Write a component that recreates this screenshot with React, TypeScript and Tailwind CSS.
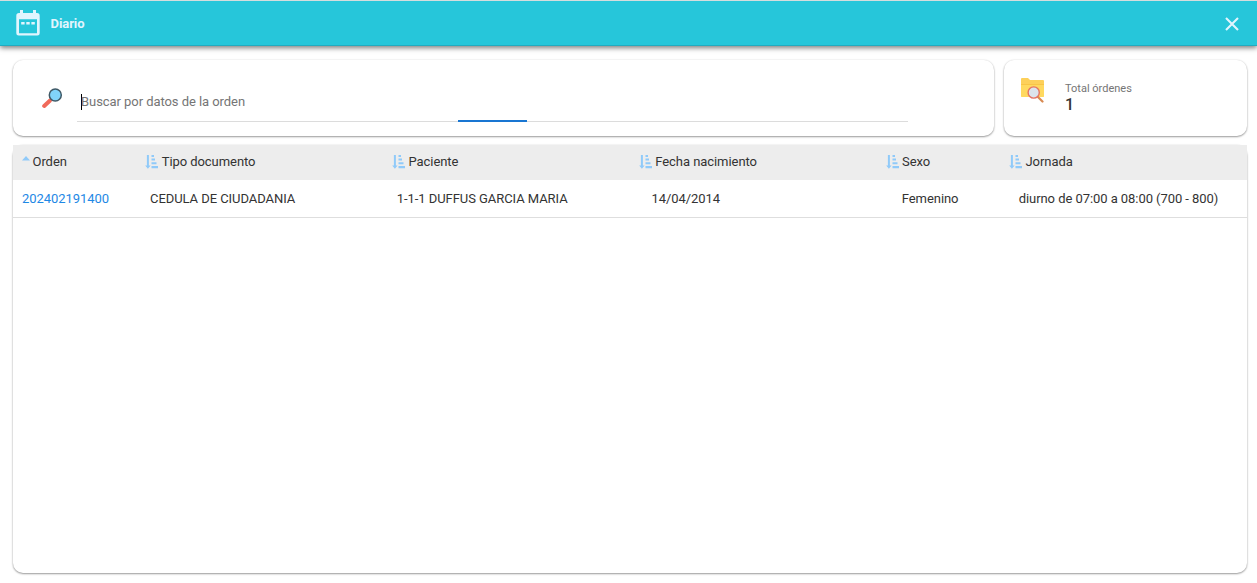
import React from 'react';

const columns = [
  { label: 'Orden', value: '202402191400', pad: 'pl-[9px]' },
  { label: 'Tipo documento', value: 'CEDULA DE CIUDADANIA', pad: 'pl-[13.6px]' },
  { label: 'Paciente', value: '1-1-1 DUFFUS GARCIA MARIA', pad: 'pl-[13.6px]' },
  { label: 'Fecha nacimiento', value: '14/04/2014', pad: 'pl-[21.5px]' },
  { label: 'Sexo', value: 'Femenino', pad: 'pl-[25px]' },
  { label: 'Jornada', value: 'diurno de 07:00 a 08:00 (700 - 800)', pad: 'pl-[18.5px]' },
];

const grid = 'grid grid-cols-[10%_20%_20%_20%_10%_20%] items-center whitespace-nowrap';
const card = 'rounded-[10px] bg-white shadow-[0_1px_2px_rgba(0,0,0,0.38),0_0_2px_rgba(0,0,0,0.10)]';

function CalendarIcon() {
  return (
    <svg width="24" height="27" viewBox="0 0 24 27" fill="#e1f5fe">
      <path
        fillRule="evenodd"
        d="M4 0h3v3h10V0h3v3h1a2.700 2.700 0 0 1 2.700 2.700v17.500a2.300 2.300 0 0 1-2.300 2.300H2.600a2.300 2.300 0 0 1-2.300-2.300V5.700A2.700 2.700 0 0 1 3 3h1zM3 9.200v14h18v-14z"
      />
      <path d="M5.200 12h3.400v2.500H5.200zM10.300 12h3.400v2.500h-3.400zM15.400 12h3.400v2.500h-3.400z" />
    </svg>
  );
}

function CloseIcon() {
  return (
    <svg width="14" height="14" viewBox="0 0 14 14" fill="none" stroke="#e1f5fe" strokeWidth="2.100">
      <path d="M1 1l12 12M13 1L1 13" />
    </svg>
  );
}

function MagnifierIcon() {
  return (
    <svg width="21" height="21" viewBox="0 0 21 21">
      <path d="M7.5 13.5l2-2" stroke="#455a64" strokeWidth="1.6" />
      <path d="M2.2 18L7.800 12.700" stroke="#f06a5b" strokeWidth="4" strokeLinecap="round" />
      <circle cx="13.300" cy="7" r="6" fill="#81d4fa" stroke="#3f5967" strokeWidth="1.5" />
    </svg>
  );
}

function FolderIcon() {
  return (
    <svg width="24" height="25" viewBox="0 0 24 25">
      <path d="M1 0h6l2 2h13a1 1 0 0 1 1 1v15.500H0V1a1 1 0 0 1 1-1z" fill="#fdd05a" />
      <path d="M0 6.500h23V18a1 1 0 0 1-1 1H1a1 1 0 0 1-1-1z" fill="#ffd95f" />
      <path d="M0 6h23v1H0z" fill="#f9c546" />
      <path d="M17 19l4.500 4.500" stroke="#d88a52" strokeWidth="2.200" strokeLinecap="round" />
      <circle cx="12.700" cy="14.500" r="5.600" fill="#dce4ec" stroke="#e57363" strokeWidth="1.400" />
    </svg>
  );
}

function SortIcon({ ascending }: { ascending: boolean }) {
  if (ascending) {
    return (
      <svg width="8" height="14" viewBox="0 0 8 14" fill="#90caf9">
        <path d="M0 5.500l4-4.500L8 5.500z" />
      </svg>
    );
  }
  return (
    <svg width="13" height="14" viewBox="0 0 13 14" fill="#90caf9">
      <path d="M1.900 0h2v10.400h1.700L2.900 13.700.2 10.400h1.700zM6.500 0h2.500v2H6.500zM6.500 3.600h3.500v2H6.500zM6.500 7.300h5v2h-5zM6.500 11.100H13v2.100H6.500z" />
    </svg>
  );
}

export default function App() {
  return (
    <div className="flex h-[583px] w-full flex-col overflow-hidden bg-white font-[Roboto,sans-serif] text-[13px] tracking-[-0.06px] text-[#333]">
      <header className="z-10 flex h-[46px] shrink-0 items-center border-t border-b border-t-[#d5dddd] border-b-[#22abc0] bg-[#26c6da] pr-[18px] pl-4 shadow-[0_2px_5px_rgba(0,0,0,0.5)]">
        <CalendarIcon />
        <h1 className="ml-[10.500px] pt-[2px] text-[13px] font-bold text-[#e1f5fe]">Diario</h1>
        <button className="ml-auto pt-[2px]" aria-label="Cerrar">
          <CloseIcon />
        </button>
      </header>

      <main className="flex min-h-0 flex-1 flex-col pt-[14px] pr-[10px] pb-[10px] pl-[13px]">
        <div className="flex h-[76px] shrink-0 gap-[10px]">
          <section className={`flex w-[981px] pl-[29px] ${card}`}>
            <div className="pt-7">
              <MagnifierIcon />
            </div>
            <div className="relative ml-[14px] flex h-[62px] w-[831px] items-center border-b border-[#dcdcdc] pt-[22px] pl-[4px]">
              <span className="h-4 w-px bg-black" />
              <span className="-ml-px pt-px text-[13px] text-[#757575]">Buscar por datos de la orden</span>
              <span className="absolute -bottom-px left-[381px] h-[2px] w-[69px] bg-[#1976d2]" />
            </div>
          </section>
          <section className={`flex flex-1 pl-[17px] ${card}`}>
            <div className="pt-[18px]">
              <FolderIcon />
            </div>
            <div className="ml-[20px] pt-[21px]">
              <p className="text-[11px] leading-[15px] tracking-normal text-[#757575]">Total órdenes</p>
              <p className="text-base leading-[18px] font-medium text-[#333]">1</p>
            </div>
          </section>
        </div>

        <section className={`mt-[9px] min-h-0 flex-1 ${card}`}>
          <div className={`${grid} h-[35px] bg-[#ededed]`}>
            {columns.map((column, index) => (
              <div key={column.label} className="flex items-center pb-[2px] pl-[9px]">
                <SortIcon ascending={index === 0} />
                <span className={index === 0 ? 'ml-[2.500px]' : 'ml-[3.300px]'}>{column.label}</span>
              </div>
            ))}
          </div>
          <div className={`${grid} h-[38px] border-b border-[#dedede]`}>
            {columns.map((column, index) => (
              <div key={column.label} className={column.pad}>
                <span className={index === 0 ? 'text-[#1e88e5]' : ''}>{column.value}</span>
              </div>
            ))}
          </div>
        </section>
      </main>
    </div>
  );
}
